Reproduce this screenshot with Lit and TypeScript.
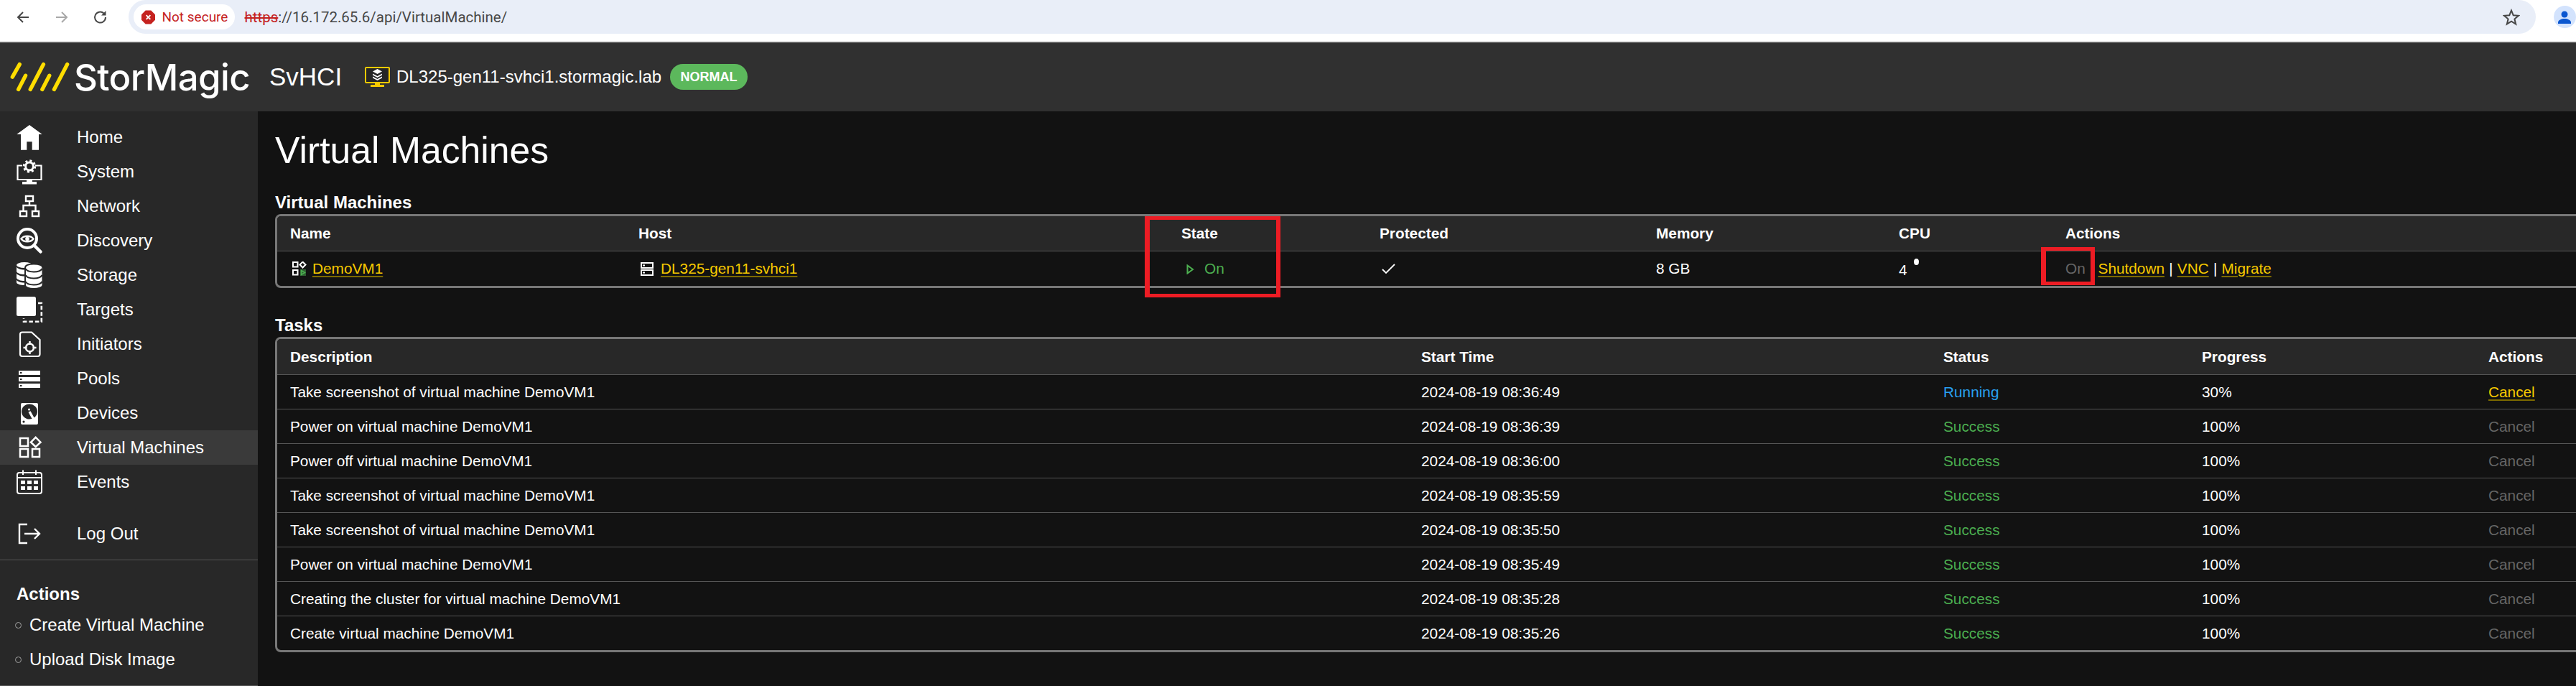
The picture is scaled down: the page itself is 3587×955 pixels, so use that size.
import { LitElement, html, svg, css } from "lit";
import { customElement } from "lit/decorators.js";

const NAV = [
  {
    label: "Home",
    icon: svg`<path fill="currentColor" d="M18 1 35.7 14H31V35.700H21.700V24.300H14.300V35.700H6V14H.3Z"/>`,
  },
  {
    label: "System",
    icon: svg`<g fill="none" stroke="currentColor" stroke-width="2.2"><path d="M8 9.500H1.500V29H34.500V9.500H26"/><circle cx="18" cy="10.500" r="5.4" stroke-width="3"/><circle cx="18" cy="10.500" r="7.8" stroke-width="2.8" stroke-dasharray="3.1 3.03"/></g><path fill="currentColor" d="M14 29h8v3h6v3.500H8V32h6z"/>`,
  },
  {
    label: "Network",
    icon: svg`<g fill="none" stroke="currentColor" stroke-width="2.4"><rect x="13" y="4" width="10" height="7"/><rect x="5" y="25" width="9" height="7"/><rect x="22" y="25" width="9" height="7"/><path d="M18 11V17M9.500 25V17H26.500V25"/></g>`,
  },
  {
    label: "Discovery",
    icon: svg`<g fill="none" stroke="currentColor"><circle cx="15" cy="15" r="13" stroke-width="4"/><path d="M25 25 33.500 33.500" stroke-width="4.500" stroke-linecap="round"/><path d="M6.500 15.500C10 10.500 20 10.500 23.500 15.500 20 20.500 10 20.500 6.500 15.500Z" stroke-width="2.4"/></g><circle cx="15" cy="15.500" r="2.800" fill="currentColor"/>`,
  },
  {
    label: "Storage",
    icon: svg`<g fill="currentColor"><ellipse cx="11" cy="4" rx="11" ry="4"/><path d="M0 6.500C1 9 6 10.500 11 10.500S21 9 22 6.500V13C21 15.500 16 17 11 17S1 15.500 0 13ZM0 15.500C1 18 6 19.500 11 19.500S21 18 22 15.500V22C21 24.500 16 26 11 26S1 24.500 0 22ZM0 24.500C1 27 6 28.500 11 28.500S21 27 22 24.500V28C21 30.500 16 32 11 32S0 30.500 0 28Z"/></g><g fill="currentColor" stroke="#282828" stroke-width="2"><path d="M12 8C12 4 18 2.500 24 2.500S36.500 4 36.500 8V32C36.500 35 30 37 24 37S12 35 12 32Z"/></g><g fill="none" stroke="#282828" stroke-width="2"><path d="M13 9C14 12 19 13.500 24 13.500S34 12 35.500 9M13 18C14 21 19 22.500 24 22.500S34 21 35.500 18M13 27C14 30 19 31.500 24 31.500S34 30 35.500 27"/></g>`,
  },
  {
    label: "Targets",
    icon: svg`<rect x="0" y="0" width="27" height="27" rx="2.500" fill="currentColor"/><path d="M30 9H34.800V34.800H10V30" fill="none" stroke="currentColor" stroke-width="2.6" stroke-dasharray="5.500 3"/>`,
  },
  {
    label: "Initiators",
    icon: svg`<g fill="none" stroke="currentColor" stroke-width="2.2"><path d="M8 1.500H21L32.500 12V32A3 3 0 0 1 29.500 35H8A3 3 0 0 1 5 32V4.500A3 3 0 0 1 8 1.500Z"/><circle cx="18.500" cy="23" r="5.500" stroke-width="2.4"/><path d="M18.500 14V19M18.500 27V32M9.500 23H14.500M22.500 23H27.500" stroke-width="2.4"/></g>`,
  },
  {
    label: "Pools",
    icon: svg`<path fill="currentColor" fill-rule="evenodd" d="M3 7H33V13H3ZM5 9V11H7.500V9ZM3 16H33V22H3ZM5 18V20H7.500V18ZM3 25H33V31H3ZM5 27V29H7.500V27Z"/>`,
  },
  {
    label: "Devices",
    icon: svg`<path fill="currentColor" fill-rule="evenodd" d="M8 4H28A2 2 0 0 1 30 6V32A2 2 0 0 1 28 34H8A2 2 0 0 1 6 32V6A2 2 0 0 1 8 4ZM18 5.500A11 10.500 0 0 0 18 26.500 11 10.500 0 0 0 18 5.500ZM10 28.500A1.600 1.600 0 0 0 10 31.700 1.600 1.600 0 0 0 10 28.500Z"/><path d="M18 16 24 27" stroke="currentColor" stroke-width="3.4" fill="none"/><circle cx="17.500" cy="13" r="1.500" fill="currentColor"/>`,
  },
  {
    label: "Virtual Machines",
    icon: svg`<g fill="none" stroke="currentColor" stroke-width="2.5"><rect x="5" y="5" width="11" height="11"/><rect x="5" y="20" width="11" height="11"/><rect x="22" y="20" width="10" height="11"/><path d="M26.700 3.800 33.500 10.700 26.700 17 20 10.700Z"/></g>`,
    active: true,
  },
  {
    label: "Events",
    icon: svg`<g fill="none" stroke="currentColor" stroke-width="2"><rect x="1" y="5" width="34" height="29" rx="3"/><path d="M2 12H34M9 1.500V8M27 1.500V8"/></g><path fill="currentColor" d="M6 16h6v5H6zM15 16h6v5h-6zM24 16h6v5h-6zM6 24h6v5H6zM15 24h6v5h-6zM24 24h6v5h-6z"/>`,
  },
];

const TASKS = [
  ["Take screenshot of virtual machine DemoVM1", "2024-08-19 08:36:49", "Running", "30%"],
  ["Power on virtual machine DemoVM1", "2024-08-19 08:36:39", "Success", "100%"],
  ["Power off virtual machine DemoVM1", "2024-08-19 08:36:00", "Success", "100%"],
  ["Take screenshot of virtual machine DemoVM1", "2024-08-19 08:35:59", "Success", "100%"],
  ["Take screenshot of virtual machine DemoVM1", "2024-08-19 08:35:50", "Success", "100%"],
  ["Power on virtual machine DemoVM1", "2024-08-19 08:35:49", "Success", "100%"],
  ["Creating the cluster for virtual machine DemoVM1", "2024-08-19 08:35:28", "Success", "100%"],
  ["Create virtual machine DemoVM1", "2024-08-19 08:35:26", "Success", "100%"],
];

@customElement("app-root")
export class AppRoot extends LitElement {
  static styles = css`
    :host {
      display: block;
      position: relative;
      width: 3587px;
      height: 955px;
      overflow: hidden;
      background: #121212;
      color: #fff;
      font-family: "Liberation Sans", Arial, sans-serif;
    }

    /* browser chrome */
    .chrome {
      display: flex;
      height: 57px;
      background: #fff;
      border-bottom: 2px solid #e2e2e2;
    }
    .nav-btn {
      width: 54px;
      height: 47px;
      display: flex;
      align-items: center;
      justify-content: center;
      color: #474747;
    }
    .nav-btn.first {
      margin-left: 5px;
    }
    .nav-btn.off {
      color: #a8a8a8;
    }
    .omnibox {
      margin-left: 13px;
      width: 3362px;
      height: 47px;
      background: #e9eef8;
      border-radius: 24px;
      display: flex;
      align-items: center;
      padding-left: 7px;
      box-sizing: border-box;
    }
    .chip {
      width: 141px;
      height: 35px;
      background: #fff;
      border-radius: 18px;
      display: flex;
      align-items: center;
      padding-left: 11px;
      box-sizing: border-box;
      color: #c5221f;
      font: 19px Roboto, sans-serif;
      gap: 9px;
    }
    .url {
      margin-left: 13px;
      font: 20.5px Roboto, sans-serif;
      color: #474747;
    }
    .url s {
      color: #c5221f;
    }
    .star {
      margin-left: auto;
      margin-right: 22px;
      display: flex;
      color: #474747;
    }
    .avatar {
      margin: 8px 0 0 25px;
      width: 31px;
      height: 31px;
      flex: none;
      border-radius: 50%;
      background: #d3e3fd;
      display: flex;
      align-items: center;
      justify-content: center;
      color: #0b57d0;
    }

    /* app header */
    .header {
      display: flex;
      align-items: center;
      height: 96px;
      background: #303030;
    }
    .logo-mark {
      margin-left: 14px;
      flex: none;
    }
    .logo-text {
      margin-left: 6px;
      width: 272px;
      font: 500 51px Inter, sans-serif;
      letter-spacing: -0.6px;
    }
    .product {
      font-size: 35px;
      width: 133px;
    }
    .host-icon {
      flex: none;
    }
    .host-name {
      margin-left: 9px;
      font-size: 24px;
      width: 381px;
    }
    .badge {
      width: 108px;
      height: 36px;
      border-radius: 18px;
      background: #5cb85c;
      display: flex;
      align-items: center;
      justify-content: center;
      font-size: 18px;
      font-weight: 700;
    }

    .body {
      display: flex;
      height: 800px;
    }

    /* sidebar */
    .sidebar {
      flex: none;
      width: 359px;
      background: #282828;
      padding-top: 12px;
      box-sizing: border-box;
      font-size: 24px;
      border-bottom: 1px solid #555;
    }
    .item {
      display: flex;
      align-items: center;
      height: 48px;
      padding-left: 23px;
    }
    .item.active {
      background: #3a3a3a;
    }
    .item svg {
      flex: none;
      width: 36px;
      height: 36px;
      margin-right: 48px;
      overflow: visible;
    }
    .logout {
      margin-top: 24px;
    }
    .side-actions {
      margin-top: 12px;
      border-top: 1px solid #555;
      padding: 26px 0 0 23px;
    }
    .side-actions h4 {
      margin: 0 0 -2px;
      font-size: 24px;
      line-height: 42px;
    }
    .side-link {
      display: flex;
      align-items: center;
      height: 48px;
      margin-left: -2px;
    }
    .side-link i {
      width: 7px;
      height: 7px;
      border: 1.5px solid #a0a0a0;
      border-radius: 50%;
      margin-right: 11px;
    }

    /* main content */
    .main {
      flex: 1;
      min-width: 0;
      padding: 24px 0 0 24px;
    }
    h1 {
      margin: 0 0 29px;
      font-size: 51.7px;
      font-weight: 400;
      line-height: 60px;
    }
    h2 {
      margin: 0 0 2px;
      font-size: 24px;
      line-height: 28px;
      font-weight: 700;
    }
    h2.tasks {
      margin-top: 38px;
    }
    .panel {
      width: 3300px;
      border: 3px solid #777;
      border-radius: 8px;
      overflow: hidden;
    }
    table {
      width: 100%;
      table-layout: fixed;
      border-collapse: separate;
      border-spacing: 0;
      font-size: 20.8px;
    }
    th {
      box-sizing: border-box;
      height: 49px;
      background: #282828;
      border-bottom: 1px solid #555;
      font-weight: 700;
      text-align: left;
      padding: 0 0 0 18px;
    }
    td {
      box-sizing: border-box;
      height: 48px;
      padding: 0 0 0 18px;
      white-space: nowrap;
    }
    tbody tr + tr td {
      border-top: 1px solid #555;
    }
    .tasks-panel th {
      height: 50px;
    }
    .tasks-panel tbody tr:first-child td {
      height: 47px;
    }
    a {
      color: #f7ca00;
      text-decoration: underline;
      text-decoration-color: #7d6a00;
      text-decoration-thickness: 2px;
      text-underline-offset: 3px;
    }
    .ico {
      vertical-align: -3px;
    }
    .ico.vm {
      margin: 0 8px 0 3px;
    }
    .ico.server {
      margin: 0 10px 0 3px;
    }
    .ico.play {
      margin: 0 14px 0 7px;
      vertical-align: -1px;
    }
    .check {
      margin-left: 3px;
    }
    .ok {
      color: #4caf50;
    }
    .running {
      color: #29a0f0;
    }
    .muted {
      color: #666;
    }
    .row-actions {
      word-spacing: 0.4px;
    }
    .dot {
      display: inline-block;
      width: 7px;
      height: 9px;
      border-radius: 50%;
      background: #fff;
      margin-left: 9px;
      vertical-align: 14px;
    }

    /* red annotation rectangles drawn on top of the screenshot */
    .mark {
      position: absolute;
      box-sizing: border-box;
      border: 5px solid #ed1c24;
      border-left-width: 7px;
      border-right-width: 6px;
    }
    .mark.state {
      left: 1594px;
      top: 301px;
      width: 189px;
      height: 113px;
    }
    .mark.on {
      left: 2842px;
      top: 344px;
      width: 75px;
      height: 53px;
    }
  `;

  private renderChrome() {
    return html`
      <div class="chrome">
        <div class="nav-btn first">
          <svg width="24" height="24" viewBox="0 0 24 24" fill="none" stroke="currentColor" stroke-width="2"><path d="M20 12H5M12 5l-7 7 7 7" /></svg>
        </div>
        <div class="nav-btn off">
          <svg width="24" height="24" viewBox="0 0 24 24" fill="none" stroke="currentColor" stroke-width="2"><path d="M4 12H19M12 5l7 7-7 7" /></svg>
        </div>
        <div class="nav-btn">
          <svg width="24" height="24" viewBox="0 0 24 24" fill="none" stroke="currentColor" stroke-width="2"><path d="M19 12A7.5 7.5 0 1 1 16.5 6.5" /><path fill="currentColor" stroke="none" d="M19.5 3V9.5H13Z" /></svg>
        </div>
        <div class="omnibox">
          <div class="chip">
            <svg width="19" height="20" viewBox="0 0 20 20"><path fill="#c5221f" d="M6 0H14L20 6V14L14 20H6L0 14V6Z" /><path stroke="#fff" stroke-width="2" d="M7 7l6 6M13 7l-6 6" /></svg>
            Not secure
          </div>
          <div class="url"><s>https</s>://16.172.65.6/api/VirtualMachine/</div>
          <div class="star">
            <svg width="24" height="24" viewBox="0 0 24 24" fill="none" stroke="currentColor" stroke-width="2"><path d="M12 2.5 14.7 9.2 22 9.8 16.4 14.5 18.2 21.5 12 17.7 5.8 21.5 7.6 14.5 2 9.8 9.3 9.2Z" /></svg>
          </div>
        </div>
        <div class="avatar">
          <svg width="24" height="24" viewBox="0 0 24 24" fill="currentColor"><circle cx="12" cy="8" r="4.5" /><path d="M3 21v-2c0-3 5-5 9-5s9 2 9 5v2z" /></svg>
        </div>
      </div>
    `;
  }

  private renderHeader() {
    return html`
      <div class="header">
        <svg class="logo-mark" width="83" height="42" viewBox="40 65 250 125" fill="none" stroke="#ffdd00" stroke-width="16" stroke-linecap="round">
          <path d="M50 128 80 75M105 122 75 180M180 75 125 180M205 122 175 180M280 75 225 180" />
        </svg>
        <div class="logo-text">StorMagic</div>
        <div class="product">SvHCI</div>
        <svg class="host-icon" width="35" height="28" viewBox="0 0 35 28">
          <rect x="1" y="1" width="33" height="21" rx="1" fill="#262626" stroke="#f7ca00" stroke-width="2" />
          <path fill="#f7ca00" d="M14 22h7v3h6v3H8v-3h6z" />
          <path fill="#fff" d="M17.500 3 24 6.500 17.500 10 11 6.500ZM11 9.500l6.500 3.500 6.500-3.500 0 2-6.500 3.500-6.500-3.500ZM11 13.500l6.500 3.500 6.500-3.500 0 2-6.500 3.500-6.500-3.500Z" />
        </svg>
        <div class="host-name">DL325-gen11-svhci1.stormagic.lab</div>
        <div class="badge">NORMAL</div>
      </div>
    `;
  }

  private renderSidebar() {
    return html`
      <nav class="sidebar">
        ${NAV.map(
          (n) => html`
            <div class="item ${n.active ? "active" : ""}">
              <svg viewBox="0 0 36 36">${n.icon}</svg>
              ${n.label}
            </div>
          `
        )}
        <div class="item logout">
          <svg viewBox="0 0 36 36" fill="none" stroke="currentColor" stroke-width="2.4">
            <path d="M15 5H4V31H15M11 18H32M25 11 32 18 25 25" />
          </svg>
          Log Out
        </div>
        <div class="side-actions">
          <h4>Actions</h4>
          <div class="side-link"><i></i>Create Virtual Machine</div>
          <div class="side-link"><i></i>Upload Disk Image</div>
        </div>
      </nav>
    `;
  }

  private renderVmTable() {
    return html`
      <div class="panel">
        <table>
          <colgroup>
            <col style="width:485px" /><col style="width:756px" /><col style="width:276px" /><col style="width:385px" /><col style="width:338px" /><col style="width:232px" /><col />
          </colgroup>
          <thead>
            <tr><th>Name</th><th>Host</th><th>State</th><th>Protected</th><th>Memory</th><th>CPU</th><th>Actions</th></tr>
          </thead>
          <tbody>
            <tr>
              <td>
                <svg class="ico vm" width="20" height="20" viewBox="0 0 20 20">
                  <g fill="none" stroke="#fff" stroke-width="2">
                    <rect x="1" y="1" width="6.500" height="6.500" /><rect x="1" y="12" width="6.500" height="6.500" /><path d="M14.500 0.500 18.500 4.500 14.500 8.500 10.500 4.500Z" />
                  </g>
                  <rect x="11" y="11" width="8" height="9" fill="#2f5f32" />
                  <path d="M12.500 12.500 17.500 15.500 12.500 18.500Z" fill="none" stroke="#4caf50" stroke-width="1.500" />
                </svg><a>DemoVM1</a>
              </td>
              <td>
                <svg class="ico server" width="18" height="19" viewBox="0 0 18 19" fill="none" stroke="#fff" stroke-width="2"><rect x="1" y="1" width="16" height="7" /><rect x="1" y="11" width="16" height="7" /><path d="M3 4.500h3M3 14.500h3" /></svg><a>DL325-gen11-svhci1</a>
              </td>
              <td class="ok">
                <svg class="ico play" width="11" height="14" viewBox="0 0 11 14" fill="none" stroke="#4caf50" stroke-width="2"><path d="M1.500 1.500 9 7 1.500 12.500Z" /></svg>On
              </td>
              <td>
                <svg class="check" width="19" height="14" viewBox="0 0 19 14" fill="none" stroke="#fff" stroke-width="1.8"><path d="M1 8 6 13 18 1" /></svg>
              </td>
              <td>8 GB</td>
              <td>4<span class="dot"></span></td>
              <td class="row-actions">
                <span class="muted">On</span> | <a>Shutdown</a> | <a>VNC</a> | <a>Migrate</a>
              </td>
            </tr>
          </tbody>
        </table>
      </div>
    `;
  }

  private renderTasks() {
    return html`
      <div class="panel tasks-panel">
        <table>
          <colgroup>
            <col style="width:1575px" /><col style="width:727px" /><col style="width:360px" /><col style="width:399px" /><col />
          </colgroup>
          <thead>
            <tr><th>Description</th><th>Start Time</th><th>Status</th><th>Progress</th><th>Actions</th></tr>
          </thead>
          <tbody>
            ${TASKS.map(
              ([desc, time, status, progress]) => html`
                <tr>
                  <td>${desc}</td>
                  <td>${time}</td>
                  <td class=${status === "Running" ? "running" : "ok"}>${status}</td>
                  <td>${progress}</td>
                  <td>${status === "Running" ? html`<a>Cancel</a>` : html`<span class="muted">Cancel</span>`}</td>
                </tr>
              `
            )}
          </tbody>
        </table>
      </div>
    `;
  }

  render() {
    return html`
      ${this.renderChrome()} ${this.renderHeader()}
      <div class="body">
        ${this.renderSidebar()}
        <main class="main">
          <h1>Virtual Machines</h1>
          <h2>Virtual Machines</h2>
          ${this.renderVmTable()}
          <h2 class="tasks">Tasks</h2>
          ${this.renderTasks()}
        </main>
      </div>
      <div class="mark state"></div>
      <div class="mark on"></div>
    `;
  }
}
